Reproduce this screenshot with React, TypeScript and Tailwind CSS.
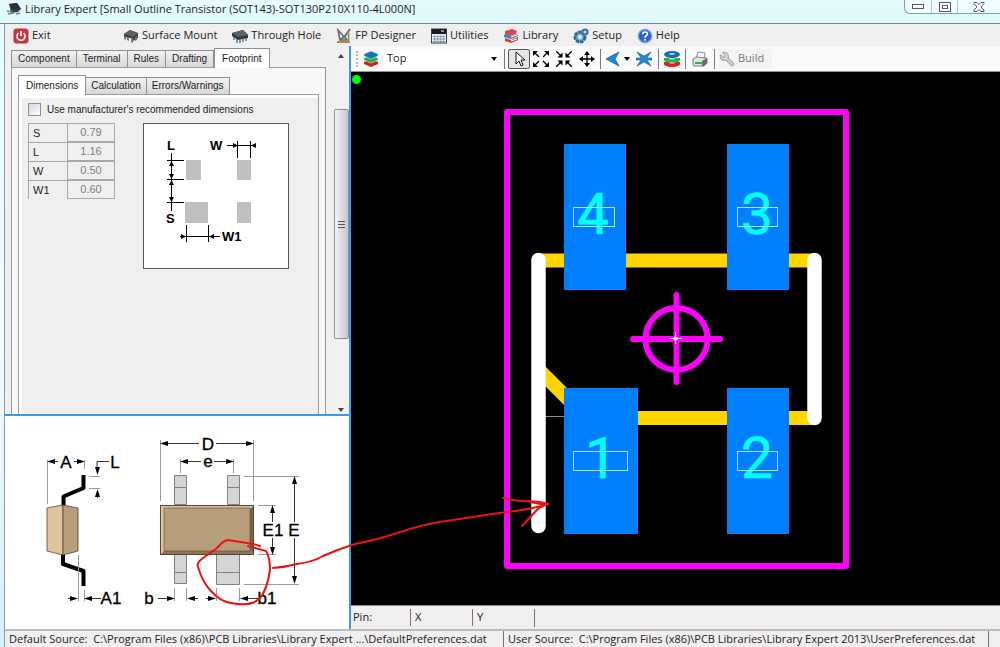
import React from 'react';
import { Wrench } from 'lucide-react';

const SurfaceMountIcon = () => (
  <svg viewBox="0 0 16 16" className="w-4 h-4 shrink-0">
    <path d="M1 6l6-4 8 3v5l-5 3-2-3-7-1z" fill="#3f3f42" />
    <path d="M1 6l6-4 8 3-5 4z" fill="#5f6064" />
    <path d="M1 8v3l2 1V9zM4 9v3l2 1V9zM8 10v4l2 1v-5zM12 9v4l2-1V8z" fill="#77787c" />
  </svg>
);

const ThroughHoleIcon = () => (
  <svg viewBox="0 0 16 16" className="w-4 h-4 shrink-0">
    <path d="M0 5l11-3 5 5v3l-10 2-6-4z" fill="#333a40" />
    <path d="M0 5l11-3 5 5-10 2z" fill="#59636a" />
    <path d="M2 9v3M5 11v4M8 11v4M11 10v4M14 10v3" stroke="#59636a" strokeWidth="1.3" />
  </svg>
);

const AppIcon = () => (
  <svg viewBox="0 0 14 14" className="w-[14px] h-[14px] shrink-0">
    <path d="M2 2l8-1 4 6-3 3-7 1z" fill="#3b444d" />
    <path d="M2 2l8-1 4 6-8 1z" fill="#2a3138" />
    <path d="M0 9l5 1M1 12l6-1M9 12l4-1" stroke="#6d8794" strokeWidth="1.4" />
  </svg>
);

const PowerIcon = () => (
  <svg viewBox="0 0 16 16" className="w-4 h-4 shrink-0">
    <rect x="1" y="1" width="14" height="14" rx="2" fill="#d4333a" stroke="#9d4347" />
    <path d="M5.5 5.2a4 4 0 1 0 5 0M8 3v5" fill="none" stroke="#fff" strokeWidth="1.6" />
  </svg>
);

const DesignerIcon = () => (
  <svg viewBox="0 0 16 16" className="w-4 h-4 shrink-0">
    <path d="M2 2l9 10H4z" fill="#eef1f5" stroke="#5d6877" strokeWidth="1.6" />
    <path d="M14 1L9 8l-5 4" fill="none" stroke="#6e6870" strokeWidth="2" />
    <path d="M12.5 3v10M1 14h13" stroke="#b68a4d" strokeWidth="1.8" />
  </svg>
);

const CalculatorIcon = () => (
  <svg viewBox="0 0 16 16" className="w-4 h-4 shrink-0">
    <rect x=".5" y="1" width="15" height="14" fill="#e8edf4" stroke="#3c4149" />
    <rect x="1" y="1" width="14" height="5" fill="#171c24" />
    <path d="M10 3h3" stroke="#fff" />
    <path d="M2.5 8.5h11M2.5 11h11M2.5 13.5h11" stroke="#667a96" strokeWidth="1.4" strokeDasharray="2 1" />
  </svg>
);

const BooksIcon = () => (
  <svg viewBox="0 0 16 16" className="w-4 h-4 shrink-0">
    <path d="M2 3l7-2 5 2-1 3-6 2-5-2z" fill="#d94b50" />
    <path d="M1 7l2-1 5 2 6-2 1 2-7 3-7-2z" fill="#4583ad" />
    <path d="M2 10l6 2 7-3v3l-7 3-6-2z" fill="#c7434b" />
    <path d="M8 9l6-2M8 13l6-2" stroke="#fff" />
  </svg>
);

const SetupIcon = () => (
  <svg viewBox="0 0 16 16" className="w-4 h-4 shrink-0">
    <circle cx="7" cy="9" r="5" fill="#78acd9" stroke="#326796" strokeWidth="3" strokeDasharray="3.5 .7" />
    <circle cx="7" cy="9" r="2" fill="#e6f1fa" />
    <circle cx="12" cy="4" r="2.6" fill="#b5d7f2" stroke="#386f9e" strokeWidth="2" />
  </svg>
);

const HelpIcon = () => (
  <svg viewBox="0 0 16 16" className="w-4 h-4 shrink-0">
    <circle cx="8" cy="8" r="6.8" fill="#2864cf" stroke="#94a8cb" strokeWidth="1.4" />
    <path d="M5.7 6.2c0-3 4.7-2.8 4.7-.2 0 1.8-2.4 1.8-2.4 3.7M8 11v1.8" fill="none" stroke="#fff" strokeWidth="1.7" />
  </svg>
);

const LayersIcon = () => (
  <svg viewBox="0 0 16 16" className="w-4 h-4 shrink-0">
    <path d="M1 11l7-3 7 3v2l-7 3-7-3z" fill="#cf2025" />
    <path d="M1 7l7-3 7 3v2l-7 3-7-3z" fill="#22b53b" stroke="#e8f7e8" strokeWidth=".5" />
    <path d="M1 3l7-3 7 3v2L8 8 1 5z" fill="#1672bd" stroke="#e8f2fb" strokeWidth=".5" />
  </svg>
);

const RingsIcon = () => (
  <svg viewBox="0 0 16 16" className="w-4 h-4 shrink-0">
    <path d="M0 11v2c0 4 16 4 16 0v-2z" fill="#d92328" />
    <ellipse cx="8" cy="11.5" rx="3" ry="1" fill="#fff" />
    <path d="M0 7v2c0 3.5 16 3.5 16 0V7z" fill="#1fba3b" />
    <ellipse cx="8" cy="7.5" rx="3" ry="1" fill="#dff5e2" />
    <ellipse cx="8" cy="3.5" rx="8" ry="3.5" fill="#1a6ca9" />
    <ellipse cx="8" cy="3" rx="3" ry="1" fill="#b9dcf2" />
  </svg>
);

const PrinterIcon = () => (
  <svg viewBox="0 0 16 16" className="w-4 h-4 shrink-0">
    <path d="M4 8l2-7 7 1-1 7z" fill="#fff" stroke="#657382" strokeWidth=".8" />
    <path d="M1 8l3-2 11 1v5l-3 3H2l-1-2z" fill="#dfe4e9" stroke="#59616a" strokeWidth=".8" />
    <path d="M10 10l5-3v5l-3 3h-2z" fill="#636d76" />
    <path d="M3 12h8" stroke="#33af4c" strokeWidth="2" />
  </svg>
);

const PointerIcon = () => (
  <svg viewBox="0 0 16 16" className="w-4 h-4">
    <path d="M5 1v12l3-3 2 5 2-1-2-5h4z" fill="#fff" stroke="#111" />
  </svg>
);

const ZoomOutIcon = () => (
  <svg viewBox="0 0 16 16" className="w-4 h-4">
    <path d="M0 0h5L0 5zM16 0v5l-5-5zM0 16v-5l5 5zM16 16h-5l5-5z" />
    <path d="M2 2l4 4M14 2l-4 4M2 14l4-4M14 14l-4-4" stroke="#000" strokeWidth="1.3" />
  </svg>
);

const ZoomInIcon = () => (
  <svg viewBox="0 0 16 16" className="w-4 h-4">
    <path d="M6.5 6.5h-5l5-5zM9.5 6.5v-5l5 5zM6.5 9.5v5l-5-5zM9.5 9.5h5l-5 5z" />
    <path d="M0 0l5 5M16 0l-5 5M0 16l5-5M16 16l-5-5" stroke="#000" strokeWidth="1.3" />
  </svg>
);

const PanIcon = () => (
  <svg viewBox="0 0 16 16" className="w-4 h-4">
    <path d="M8 0l3 4H5zM8 16l3-4H5zM0 8l4-3v6zM16 8l-4-3v6z" />
    <path d="M8 2v12M2 8h12" stroke="#000" strokeWidth="1.3" />
  </svg>
);

const BackIcon = () => (
  <svg viewBox="0 0 16 16" className="w-4 h-4">
    <path d="M1 8l13-7-4 7 4 7z" fill="#1c88d5" stroke="#1b5f9d" strokeWidth=".8" />
  </svg>
);

const CrossArrowsIcon = () => (
  <svg viewBox="0 0 16 16" className="w-4 h-4">
    <path d="M1 1l7 4 7-4-4 6h5v2h-5l4 6-7-4-7 4 4-6H0V7h5z" fill="#2488cd" stroke="#1b5f91" strokeWidth=".6" />
  </svg>
);

const menuItems = [
  { label: 'Surface Mount', icon: <SurfaceMountIcon /> },
  { label: 'Through Hole', icon: <ThroughHoleIcon /> },
  { label: 'FP Designer', icon: <DesignerIcon /> },
  { label: 'Utilities', icon: <CalculatorIcon /> },
  { label: 'Library', icon: <BooksIcon /> },
  { label: 'Setup', icon: <SetupIcon /> },
  { label: 'Help', icon: <HelpIcon /> }
];

const dimensions = [
  { name: 'S', value: '0.79' },
  { name: 'L', value: '1.16' },
  { name: 'W', value: '0.50' },
  { name: 'W1', value: '0.60' }
];

const pads = [
  { pin: '4', x: 564, y: 144, width: 62, textX: 593, boxX: 574, boxWidth: 41, boxY: 207 },
  { pin: '3', x: 727, y: 144, width: 62, textX: 757, boxX: 738, boxWidth: 40, boxY: 207 },
  { pin: '1', x: 564, y: 388, width: 74, textX: 601, boxX: 574, boxWidth: 54, boxY: 451 },
  { pin: '2', x: 727, y: 388, width: 62, textX: 757, boxX: 738, boxWidth: 40, boxY: 451 }
];

interface TabProps {
  label: string;
  active?: boolean;
  roomy?: boolean;
}

const Tab: React.FC<TabProps> = ({ label, active = false, roomy = false }) => (
  <button
    type="button"
    role="tab"
    aria-selected={active}
    className={
      active
        ? 'h-5 px-[7px] -mb-px bg-white border border-b-0 border-[#8d9096] whitespace-nowrap'
        : `h-[17px] ${roomy ? 'px-[6px]' : 'px-[5px]'} bg-gradient-to-b from-[#f2f2f2] to-[#d8d8d8] border border-l-0 first:border-l border-b-0 border-[#8d9096] whitespace-nowrap leading-4`
    }
  >
    {label}
  </button>
);

const Separator = () => <div className="w-px h-5 bg-[#77787a] shrink-0" />;

// arrow head with its tip on x,y
const Head = ({ x, y, dir, size = 8 }: { x: number; y: number; dir: 'l' | 'r' | 'u' | 'd'; size?: number }) => {
  const angle = { r: 0, d: 90, l: 180, u: 270 }[dir];
  return <path d={`M0 0L${-size} -2.5V2.5z`} transform={`translate(${x} ${y}) rotate(${angle})`} fill="#000" />;
};

const PadDiagram = () => (
  <svg viewBox="144 124 144 144" className="w-full h-full" fontFamily="'Liberation Sans', sans-serif" fontSize="13" fontWeight="bold">
    <g fill="#bfbfbf">
      <rect x="186" y="160" width="15" height="20" />
      <rect x="237" y="160" width="14" height="20" />
      <rect x="185" y="202" width="23" height="21" />
      <rect x="237" y="202" width="14" height="21" />
    </g>
    <path
      d="M171.5 153v58M167 160.5h17M167 179.5h17M167 202.5h17M186.5 225v17M208.5 225v17M180 236.5h6M186 236.5h34M237.5 141v17M250.5 141v17M227 145.5h10M238 145.5h18"
      fill="none"
      stroke="#000"
    />
    <Head x={171.5} y={161} dir="u" size={5} />
    <Head x={171.5} y={179} dir="d" size={5} />
    <Head x={171.5} y={180} dir="u" size={5} />
    <Head x={171.5} y={202} dir="d" size={5} />
    <Head x={186} y={236.5} dir="r" size={5} />
    <Head x={209} y={236.5} dir="l" size={5} />
    <Head x={238} y={145.5} dir="r" size={5} />
    <Head x={251} y={145.5} dir="l" size={5} />
    <text x="167" y="150">L</text>
    <text x="210" y="150">W</text>
    <text x="166" y="223">S</text>
    <text x="222" y="241">W1</text>
  </svg>
);

const PackageDiagram = () => (
  <svg
    viewBox="5 416 344 213"
    className="w-full h-full"
    fontFamily="'Liberation Sans', sans-serif"
    fontSize="17"
    textAnchor="middle"
  >
    {/* side view */}
    <path d="M83.5 475v13l-20 8.5v10M63 554v10l20.5 7v15" fill="none" stroke="#000" strokeWidth="4" strokeLinejoin="round" />
    <path d="M47 508l16-3v50l-16-4z" fill="#e2c49c" stroke="#57452f" strokeWidth=".8" />
    <path d="M63 505l15 3v43l-15 4z" fill="#b69e7d" stroke="#57452f" strokeWidth=".8" />
    {/* leads */}
    <g fill="#d5d5d5" stroke="#818181">
      <path d="M174.5 475.5h12v29h-12zM227.5 475.5h12v29h-12zM174.5 554.5h12v29h-12zM216.5 554.5h23v30h-23z" />
      <path d="M174.5 487.5h12M227.5 487.5h12M174.5 572.5h12M216.5 572.5h23" />
    </g>
    {/* body */}
    <path d="M160 505h94l-4 4h-86z" fill="#dfc19a" />
    <path d="M160 505l4 4v42l-4 4z" fill="#e2c49c" />
    <path d="M254 505l-4 4v42l4 4z" fill="#78654d" />
    <path d="M160 555l4-4h86l4 4z" fill="#8c7656" />
    <rect x="164" y="508" width="86" height="43" fill="#b69e7d" stroke="#58472f" strokeWidth=".6" />
    <rect x="160.5" y="505.5" width="93" height="49" fill="none" stroke="#58472f" />
    {/* extension lines */}
    <path
      d="M47.5 460v44M84.5 460v9M89 476.5h11M89 488.5h11M160.5 440v61M253.5 440v61M180.5 459v14M233.5 459v14M244 476.5h55M244 584.5h55M258 505.5h18M258 554.5h18M78.5 555v46M84.5 590v11M174.5 588v13M186.5 588v13M216.5 588v13M239.5 588v13"
      fill="none"
      stroke="#9a9a9a"
    />
    {/* dimension lines */}
    <path
      d="M168 443.5h31M216 443.5h30M188 461.5h13M214 461.5h12M54 461.5h4M74 461.5h4M109 461.5h-12v6M97.5 494v4M272.5 512v10M272.5 538v10M294.5 484v38M294.5 538v38M68 598.5h4M92 598.5h9M158 598.5h10M194 598.5h4M206 598.5h3M247 598.5h11"
      fill="none"
      stroke="#333"
    />
    <Head x={160} y={443.5} dir="l" />
    <Head x={254} y={443.5} dir="r" />
    <Head x={180} y={461.5} dir="l" />
    <Head x={234} y={461.5} dir="r" />
    <Head x={47} y={461.5} dir="l" />
    <Head x={85} y={461.5} dir="r" />
    <Head x={97.5} y={475} dir="d" />
    <Head x={97.5} y={489} dir="u" />
    <Head x={272.5} y={505} dir="u" />
    <Head x={272.5} y={555} dir="d" />
    <Head x={294.5} y={476} dir="u" />
    <Head x={294.5} y={584} dir="d" />
    <Head x={78} y={598.5} dir="r" />
    <Head x={84} y={598.5} dir="l" />
    <Head x={175} y={598.5} dir="r" />
    <Head x={187} y={598.5} dir="l" />
    <Head x={216} y={598.5} dir="r" />
    <Head x={240} y={598.5} dir="l" />
    <g stroke="#000" strokeWidth=".3">
      <text x="66" y="468">A</text>
      <text x="115" y="468">L</text>
      <text x="208" y="450">D</text>
      <text x="208" y="467">e</text>
      <text x="273" y="536">E1</text>
      <text x="294" y="536">E</text>
      <text x="111" y="604">A1</text>
      <text x="149" y="604">b</text>
      <text x="267" y="604">b1</text>
    </g>
  </svg>
);

const FootprintCanvas = () => (
  <svg viewBox="351 72 649 533" className="absolute inset-0 w-full h-full">
    <circle cx="356.5" cy="79.5" r="4.5" fill="#0f0" />
    <rect x="507" y="112" width="339" height="454" fill="none" stroke="#f0f" strokeWidth="6" strokeLinejoin="round" />
    <path d="M538 260.5h276M638 418h176M538 369l40 40" fill="none" stroke="#ffd500" strokeWidth="14" />
    <path d="M545 416.5h20" stroke="#8d8d8d" />
    <path d="M538.5 260v266M814.5 260v158" stroke="#fff" strokeWidth="14.5" strokeLinecap="round" />
    {pads.map((pad) => (
      <g key={pad.pin}>
        <rect x={pad.x} y={pad.y} width={pad.width} height="146" fill="#0080ff" />
        <text
          x={pad.textX}
          y={pad.y + 90}
          fill="#0ff"
          stroke="#0ff"
          strokeWidth=".6"
          fontFamily="Roboto, sans-serif"
          fontSize="57"
          textAnchor="middle"
        >
          {pad.pin}
        </text>
        <rect x={pad.boxX - 0.5} y={pad.boxY + 0.5} width={pad.boxWidth} height="19" fill="none" stroke="#b5e2ff" />
      </g>
    ))}
    <g fill="none" stroke="#f0f" strokeWidth="6" strokeLinecap="round">
      <circle cx="676.5" cy="339" r="31" />
      <path d="M676.5 295v87M633 339h87" />
    </g>
    <path d="M670 338.5h12M675.5 332v12" stroke="#fff" />
    <circle cx="675.5" cy="338.5" r="2" fill="#fff" />
  </svg>
);

export const App: React.FC = () => {
  return (
    <div className="h-screen flex flex-col overflow-hidden bg-[#f0eeee] text-[11px] text-[#222] font-['Open_Sans','Liberation_Sans',sans-serif]">
      <header className="h-6 shrink-0 flex items-start justify-between bg-gradient-to-b from-[#e8fbfd] to-[#dcf8fa] border-b border-[#7b898e]">
        <h1 className="flex items-center gap-1 pl-[7px] leading-[18px] whitespace-nowrap">
          <AppIcon />
          Library Expert [Small Outline Transistor (SOT143)-SOT130P210X110-4L000N]
        </h1>
        <div className="flex h-[14px] w-24 border border-t-0 border-r-0 border-[#8a9da4] rounded-bl-md bg-[#effdfe]">
          <button type="button" aria-label="Minimize" className="w-[27px] flex items-center justify-center border-r border-[#b4c6cb]">
            <svg viewBox="0 0 12 5" className="w-3 h-[5px]">
              <rect x=".5" y=".5" width="11" height="4" fill="#fff" stroke="#535b66" />
            </svg>
          </button>
          <button type="button" aria-label="Maximize" className="w-[26px] flex items-center justify-center border-r border-[#b4c6cb]">
            <svg viewBox="0 0 12 10" className="w-3 h-[10px]" fill="#fff" stroke="#535b66">
              <rect x=".5" y=".5" width="11" height="9" />
              <rect x="3.5" y="3.5" width="5" height="3" />
            </svg>
          </button>
          <button type="button" aria-label="Close" className="flex-1 flex items-center justify-center">
            <svg viewBox="0 0 12 10" className="w-3 h-[10px]">
              <path d="M1 .5h3l2 2 2-2h3v1L8 5l3 3v1.5H8l-2-2-2 2H1V8l3-3-3-3.5z" fill="#fff" stroke="#535b66" />
            </svg>
          </button>
        </div>
      </header>

      <div className="flex flex-1 min-h-0">
        <div className="w-[5px] shrink-0 bg-gradient-to-b from-[#e4fafc] via-[#f5fbff] to-[#d9effb] border-r border-[#8d9a9f]" />
        <div className="flex-1 min-w-0 flex flex-col">
          <nav className="h-[22px] shrink-0 flex items-center pl-2 pt-px bg-[#f0efef] whitespace-nowrap">
            <button type="button" className="flex items-center gap-[3px] w-[110px]">
              <PowerIcon />
              Exit
            </button>
            <div className="flex items-center gap-[15px]">
              {menuItems.map((item) => (
                <button key={item.label} type="button" className="flex items-center gap-[3px]">
                  {item.icon}
                  {item.label}
                </button>
              ))}
            </div>
          </nav>

          <main className="relative flex-1 min-h-0 flex">
            <section className="w-[346px] shrink-0 flex flex-col border-r-2 border-[#3f97ea]">
              <div className="flex-1 min-h-0 flex text-[10px] font-['Liberation_Sans',sans-serif] border-b-2 border-[#3f97ea] bg-[#f0f0f0]">
                <div className="flex-1 min-w-0 flex flex-col pl-[6px] pr-[7px] pt-px">
                  <div role="tablist" className="flex items-end h-5 relative z-10">
                    <Tab label="Component" roomy />
                    <Tab label="Terminal" roomy />
                    <Tab label="Rules" roomy />
                    <Tab label="Drafting" roomy />
                    <Tab label="Footprint" active />
                  </div>
                  <div className="flex-1 min-h-0 flex flex-col px-[6px] pt-[6px] border border-b-0 border-[#9a9ca0] bg-[#f8f8f8]">
                    <div role="tablist" className="flex items-end h-5 relative z-10">
                      <Tab label="Dimensions" active />
                      <Tab label="Calculation" />
                      <Tab label="Errors/Warnings" />
                    </div>
                    <div className="flex-1 min-h-0 border border-b-0 border-[#9a9ca0] bg-white pl-[3px] pt-[3px]">
                      <div className="h-full bg-[#efefef] pl-[6px] pt-[5px]">
                        <label className="flex items-center gap-[6px] h-3 whitespace-nowrap">
                          <input
                            type="checkbox"
                            className="appearance-none w-[13px] h-[13px] border border-[#8e8f8f] bg-gradient-to-br from-[#d5d5d5] to-white"
                          />
                          Use manufacturer's recommended dimensions
                        </label>
                        <div className="flex gap-7 pt-2">
                          <div className="w-[87px]">
                            {dimensions.map((dim) => (
                              <div key={dim.name} className="flex h-[19px] text-[11px]">
                                <label htmlFor={dim.name} className="w-[39px] pl-1 leading-[19px] border-t border-l border-[#a5a5a5]">
                                  {dim.name}
                                </label>
                                <input
                                  id={dim.name}
                                  readOnly
                                  value={dim.value}
                                  className="w-12 text-center text-[#7f7f7f] border border-[#a9a9a9] bg-[#efefef]"
                                />
                              </div>
                            ))}
                          </div>
                          <div className="w-[146px] h-[146px] border border-[#555] bg-white">
                            <PadDiagram />
                          </div>
                        </div>
                      </div>
                    </div>
                  </div>
                </div>
                <div className="w-4 shrink-0 flex flex-col items-center bg-[#f1f1f1] pt-2 pb-[2px]">
                  <svg viewBox="0 0 6 4" className="w-[6px] h-1 shrink-0">
                    <path d="M3 0l3 4H0z" fill="#444" />
                  </svg>
                  <div className="h-[51px] shrink-0" />
                  <div className="w-[15px] h-[230px] flex items-center justify-center rounded-xs border border-[#8f9194] bg-gradient-to-r from-[#f5f5f5] to-[#c6c6ca]">
                    <svg viewBox="0 0 7 8" className="w-[7px] h-2">
                      <path d="M0 1.5h7M0 4.5h7M0 7.5h7" stroke="#555" />
                    </svg>
                  </div>
                  <svg viewBox="0 0 6 4" className="w-[6px] h-1 shrink-0 mt-auto">
                    <path d="M0 0h6L3 4z" fill="#444" />
                  </svg>
                </div>
              </div>
              <div className="h-[213px] shrink-0 bg-white">
                <PackageDiagram />
              </div>
            </section>

            <section className="flex-1 min-w-0 flex flex-col">
              <div className="h-[26px] shrink-0 flex items-center gap-1 pl-[5px] bg-[#fafafa] border-b border-[#8f9696]">
                <div className="w-[3px] h-4 border-l-2 border-dotted border-[#b9b9b9]" />
                <LayersIcon />
                <div className="relative">
                  <select aria-label="Layer" className="appearance-none block w-[117px] h-5 pl-1 bg-white">
                    <option>Top</option>
                  </select>
                  <svg viewBox="0 0 6 4" className="absolute right-[3px] top-2 w-[6px] h-1 pointer-events-none">
                    <path d="M0 0h6L3 4z" />
                  </svg>
                </div>
                <Separator />
                <button type="button" aria-label="Select" className="w-[22px] h-5 -mx-px flex items-center justify-center border border-[#555] rounded-xs bg-[#e5e5e5]">
                  <PointerIcon />
                </button>
                <div className="flex items-center gap-[7px] pr-px">
                  <button type="button" aria-label="Zoom extents"><ZoomOutIcon /></button>
                  <button type="button" aria-label="Zoom in"><ZoomInIcon /></button>
                  <button type="button" aria-label="Pan"><PanIcon /></button>
                </div>
                <Separator />
                <button type="button" aria-label="Back" className="flex items-center gap-[3px]">
                  <BackIcon />
                  <svg viewBox="0 0 6 4" className="w-[6px] h-1">
                    <path d="M0 0h6L3 4z" />
                  </svg>
                </button>
                <button type="button" aria-label="Center" className="px-[2px]"><CrossArrowsIcon /></button>
                <Separator />
                <button type="button" aria-label="Layers" className="px-px"><RingsIcon /></button>
                <Separator />
                <button type="button" aria-label="Print" className="px-[2px]"><PrinterIcon /></button>
                <Separator />
                <button type="button" className="flex items-center gap-[3px] h-5 pr-2 bg-[#f3f3f3] text-[#777]">
                  <Wrench className="w-4 h-4 -scale-x-100 text-[#aaa] fill-[#ddd]" />
                  Build
                </button>
              </div>
              <div className="relative flex-1 min-h-0 bg-black">
                <FootprintCanvas />
              </div>
              <div className="h-6 shrink-0 flex items-center border-t border-[#888] bg-[#f0eeee]">
                <span className="w-[59px] pl-[2px]">Pin:</span>
                <span className="w-[62px] pl-1 border-l border-[#777]">X</span>
                <span className="w-[62px] pl-1 border-l border-[#777]">Y</span>
                <span className="h-[18px] border-l border-[#777]" />
              </div>
            </section>

            {/* red pen markup across both panes */}
            <svg
              viewBox="5 46 560 580"
              className="absolute left-0 top-0 w-[560px] h-[580px] pointer-events-none"
              fill="none"
              stroke="#e81313"
              strokeWidth="2"
              strokeLinecap="round"
              strokeLinejoin="round"
            >
              <path d="M260 546Q255 544 247 543L228 540Q224 540 217 548L203 558Q196 563 198 567Q203 584 213 593Q220 601 231 603Q252 607 260 598Q267 590 270 570Q270 557 266 551L248 546" />
              <path d="M273 568Q286 567 297 564Q313 562 323 556Q339 549 355 544Q380 539 394 534Q426 523 453 520L492 514Q530 510 548 504" />
              <path d="M503 498Q514 501 524 501Q540 501 548 504Q540 506 535 512L522 526M530 502L546 505" />
            </svg>
          </main>

          <footer className="h-[18px] shrink-0 flex items-start border-t-2 border-[#bcbcbc] pl-1 whitespace-nowrap leading-4">
            <span className="w-[494px] shrink-0">
              Default Source: &nbsp;C:\Program Files (x86)\PCB Libraries\Library Expert ...\DefaultPreferences.dat
            </span>
            <span className="w-[485px] shrink-0 pl-1 border-l border-[#777]">
              User Source: &nbsp;C:\Program Files (x86)\PCB Libraries\Library Expert 2013\UserPreferences.dat
            </span>
            <span className="h-4 border-l border-[#777]" />
          </footer>
        </div>
      </div>
    </div>
  );
};

export default App;
